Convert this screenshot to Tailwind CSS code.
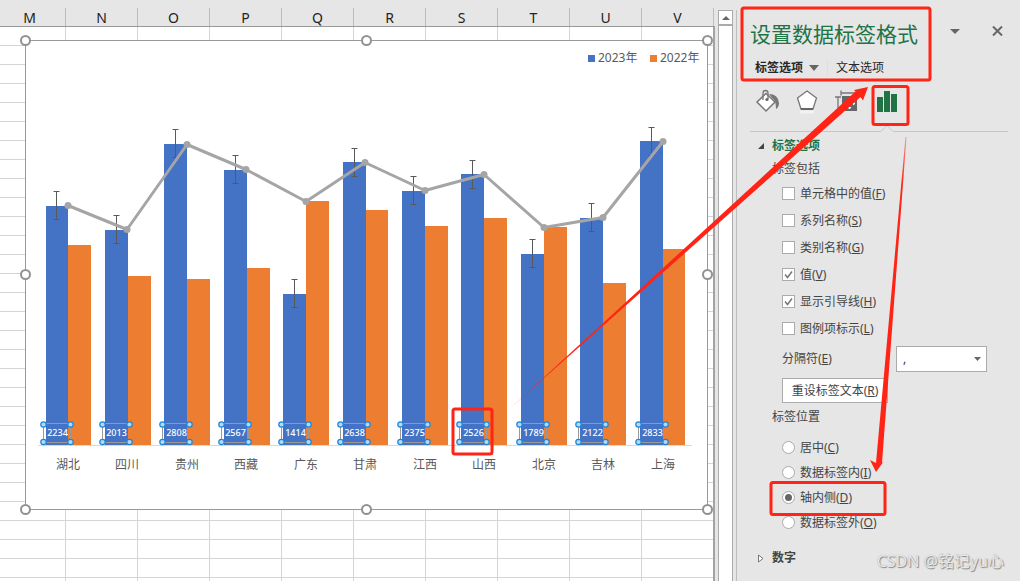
<!DOCTYPE html>
<html lang="zh-CN">
<head>
<meta charset="utf-8">
<title>设置数据标签格式</title>
<script src="https://cdn.jsdelivr.net/npm/@tailwindcss/browser@4"></script>
</head>
<body class="bg-[#e6e6e6]">
<div class="relative flex h-screen min-h-[581px] overflow-hidden bg-[#e6e6e6] font-['Noto_Sans','Noto_Sans_CJK_SC',sans-serif] text-xs text-[#444]">

  <!-- Worksheet -->
  <main class="flex min-w-0 flex-1 flex-col overflow-hidden">
    <div class="flex h-[27px] shrink-0 overflow-hidden border-b border-[#999] pt-2 text-sm leading-5 text-[#222]" id="cols"></div>
    <div class="relative flex-1 border-r-2 border-[#a3a3a3] bg-white bg-[linear-gradient(to_right,transparent_71px,#d4d4d4_71px),linear-gradient(to_bottom,transparent_18px,#d4d4d4_18px)] bg-[size:72px_19px] bg-[position:-6px_0]">
      <svg id="chart" class="absolute left-[18px] top-[6px] h-[484px] w-[698px]" viewBox="18 33 698 484" role="img" aria-label="2023年 2022年"></svg>
    </div>
  </main>

  <!-- Vertical scrollbar -->
  <div class="ml-[3px] mr-[3px] flex w-[15px] shrink-0 flex-col pt-[10px]">
    <button type="button" aria-label="向上滚动" class="flex h-[15px] items-center justify-center border border-[#ababab] bg-white">
      <svg class="h-1 w-2" viewBox="0 0 8 4"><path d="M0 4 4 0 8 4z" fill="#666"/></svg>
    </button>
    <div class="flex-1 border-x border-t border-[#ababab] bg-white"></div>
  </div>

  <!-- Format pane -->
  <aside class="flex w-[284px] shrink-0 flex-col pt-[10px]">
    <div class="flex-1 border-l border-[#bdbdbd] pl-[13px] pr-3">
      <header class="flex h-12 items-center">
        <h1 class="text-[21px] font-normal leading-6 text-[#217346]">设置数据标签格式</h1>
        <button type="button" aria-label="任务窗格选项" class="ml-8 flex h-5 w-3 items-center pb-1.5"><svg class="h-[5px] w-[10px]" viewBox="0 0 10 5"><path d="M0 0H10L5 5z" fill="#666"/></svg></button>
        <button type="button" aria-label="关闭" class="ml-auto mr-1 flex h-5 w-3 items-center pb-1.5"><svg class="h-[10px] w-[11px]" viewBox="0 0 11 10"><path d="M1 .5 10 9.500M10 .5 1 9.500" stroke="#666" stroke-width="2"/></svg></button>
      </header>
      <nav class="flex h-5 items-center pl-[5px] text-[#262626]">
        <button type="button" class="flex items-center gap-1.5 font-bold">标签选项 <svg class="h-[6px] w-[10px]" viewBox="0 0 10 6"><path d="M0 0H10L5 6z" fill="#666"/></svg></button>
        <button type="button" class="ml-2 border-l border-[#dedede] pl-2">文本选项</button>
      </nav>
      <div class="flex h-[38px] items-center gap-4 pl-[5px] pt-2">
        <button type="button" aria-label="填充与线条"><svg class="h-7 w-6" viewBox="0 0 24 28">
          <path d="M11 6.500 20 15 11 24 2 15z" fill="#fff" stroke="#777" stroke-width="1.500"/>
          <path d="M8 13V6Q8 3.500 10.500 3.500T13 6V12" fill="none" stroke="#777" stroke-width="1.300"/><circle cx="12" cy="12.500" r="1.600" fill="#666"/>
          <path d="M14 7Q23 7 24 16Q24 20 21 22Q21 13 17 11z" fill="#777"/></svg></button>
        <button type="button" aria-label="效果"><svg class="h-7 w-6" viewBox="0 0 24 28">
          <path d="M12 4 21.500 11 18 22H6L2.500 11z" fill="#fff" stroke="#777" stroke-width="1.300"/><path d="M6 22H18" stroke="#666" stroke-width="2"/><path d="M5 25H19" stroke="#fff" stroke-width="3" opacity=".5"/></svg></button>
        <button type="button" aria-label="大小与属性"><svg class="h-7 w-6" viewBox="0 0 24 28">
          <path d="M6 6H22M6 3.500V8.500M22 3.500V8.500M3 10V24M0 10H6M0 24H6" fill="none" stroke="#777" stroke-width="1.300"/>
          <path d="M7 9H22V24H7z" fill="#666"/><path d="M14.500 11V22M9 16.500H20" stroke="#fff" stroke-width="1.500" stroke-dasharray="3 1.500"/><path d="M12.500 13 14.500 11 16.500 13zM12.500 20 14.500 22 16.500 20zM11 14.500 9 16.500 11 18.500zM18 14.500 20 16.500 18 18.500z" fill="#fff"/></svg></button>
        <button type="button" aria-label="标签选项"><svg class="h-7 w-6" viewBox="0 0 24 28"><path d="M2 10H8V25H2zM9 4H15V25H9zM16 7H22V25H16z" fill="#217346"/></svg></button>
      </div>
      <div class="mt-[9px] flex h-[7px] items-end">
        <div class="h-px w-[131px] bg-[#c6c6c6]"></div>
        <svg class="h-[7px] w-3" viewBox="0 0 12 7"><path d="M0 6.500 6 .5 12 6.500" fill="none" stroke="#c6c6c6"/></svg>
        <div class="h-px flex-1 bg-[#c6c6c6]"></div>
      </div>

      <button type="button" class="mt-1 flex h-5 items-center gap-2 pl-2 font-bold text-[#217346]"><svg class="h-[6px] w-[6px]" viewBox="0 0 6 6"><path d="M6 0V6H0z" fill="#444"/></svg>标签选项</button>
      <fieldset class="mt-[3px]">
        <legend class="h-5 pl-[22px] leading-5">标签包括</legend>
        <div class="flex flex-col pl-8 pt-px" id="checks"></div>
      </fieldset>
      <div class="mt-1 flex h-[26px] items-center pl-8">
        <label for="sep" class="w-[114px]">分隔符(<u>E</u>)</label>
        <div class="relative h-[26px] w-[91px]">
          <select id="sep" class="h-full w-full appearance-none border border-[#ababab] bg-white px-1.5 text-[#333]"><option>,</option></select>
          <svg class="pointer-events-none absolute right-1.5 top-[11px] h-1 w-[7px]" viewBox="0 0 7 4"><path d="M0 0H7L3.500 4z" fill="#666"/></svg>
        </div>
      </div>
      <button type="button" class="ml-8 mt-1.5 h-[25px] w-[106px] border border-[#ababab] bg-white">重设标签文本(<u>R</u>)</button>
      <fieldset class="mt-1">
        <legend class="h-5 pl-[22px] leading-5">标签位置</legend>
        <div class="flex flex-col pl-8 pt-2" id="radios"></div>
      </fieldset>
      <button type="button" class="mt-[13px] flex h-5 items-center gap-2 pl-2 font-bold"><svg class="h-[9px] w-[6px]" viewBox="0 0 6 9"><path d="M.5 1 5 4.500.5 8z" fill="#fff" stroke="#777"/></svg>数字</button>
    </div>
  </aside>

  <!-- Highlight boxes and arrows lying over the sheet and pane -->
  <svg class="pointer-events-none absolute left-0 top-0 h-[581px] w-[1020px]" viewBox="0 0 1020 581" fill="none">
    <defs>
      <linearGradient id="fadeA" gradientUnits="userSpaceOnUse" x1="505" y1="413" x2="560" y2="363"><stop stop-color="#ff2415" stop-opacity=".3"/><stop offset="1" stop-color="#ff2415"/></linearGradient>
      <linearGradient id="fadeB" gradientUnits="userSpaceOnUse" x1="906" y1="137" x2="902" y2="185"><stop stop-color="#ff2415" stop-opacity=".4"/><stop offset="1" stop-color="#ff2415"/></linearGradient>
    </defs>
    <g stroke="#ff2415" stroke-width="3">
      <rect x="742" y="8" width="188" height="72" rx="2"/>
      <rect x="873" y="86.500" width="35" height="38" rx="2"/>
      <rect x="771" y="482.500" width="114" height="32" rx="2"/>
      <rect x="453" y="409" width="39" height="45" rx="2"/>
    </g>
    <path d="M505 413 855.500 91.500 854 90 868 87 863 100.500 860.500 97z" fill="url(#fadeA)"/>
    <path d="M905.500 137H906.500L882 463 884 461 876 472 870 460 876 463z" fill="url(#fadeB)"/>
  </svg>

  <div class="absolute bottom-2 right-4 text-base leading-6 text-[#e8e8e8] [text-shadow:1px_1px_1px_#888,0_0_1px_#aaa]">CSDN @铭记yu心</div>
</div>

<script>
document.getElementById('cols').innerHTML = [...'MNOPQRSTUV'].map((c, i) =>
  `<div class="${i ? 'w-[72px] shrink-0 border-r border-[#bdbdbd] text-center' : 'w-[66px] shrink-0 border-r border-[#bdbdbd] pr-1.5 text-center'}">${c}</div>`).join('');

document.getElementById('checks').innerHTML = [
  ['单元格中的值', 'F', 0], ['系列名称', 'S', 0], ['类别名称', 'G', 0],
  ['值', 'V', 1], ['显示引导线', 'H', 1], ['图例项标示', 'L', 0]
].map(([t, k, on]) => `<label class="flex h-[27px] items-center gap-[5px]">
  <span class="grid h-[13px] w-[13px] place-items-center"><input type="checkbox" ${on ? 'checked' : ''} class="peer col-start-1 row-start-1 h-[13px] w-[13px] appearance-none border border-[#ababab] bg-white">
  <svg class="pointer-events-none invisible col-start-1 row-start-1 h-[9px] w-[9px] peer-checked:visible" viewBox="0 0 9 9"><path d="M1 4.500 3.500 7.500 8 1.500" fill="none" stroke="#777" stroke-width="1.500"/></svg></span>
  <span>${t}(<u>${k}</u>)</span></label>`).join('');

document.getElementById('radios').innerHTML = [
  ['居中', 'C', 0], ['数据标签内', 'I', 0], ['轴内侧', 'D', 1], ['数据标签外', 'O', 0]
].map(([t, k, on]) => `<label class="flex h-[25px] items-center gap-[5px]">
  <span class="grid h-[13px] w-[13px] place-items-center"><input type="radio" name="pos" ${on ? 'checked' : ''} class="peer col-start-1 row-start-1 h-[13px] w-[13px] appearance-none rounded-full border border-[#ababab] bg-white">
  <span class="pointer-events-none invisible col-start-1 row-start-1 h-[7px] w-[7px] rounded-full bg-[#666] peer-checked:visible"></span></span>
  <span>${t}(<u>${k}</u>)</span></label>`).join('');

// name, value, blue left, middle, orange right, blue top, orange top, error top, trend y
const rows = [
  ['湖北', 2234, 46, 68, 91, 206, 245, 191, 205], ['四川', 2013, 105, 128, 151, 230, 276, 215, 229],
  ['贵州', 2808, 164, 187, 210, 144, 279, 129, 144], ['西藏', 2567, 224, 247, 270, 170, 268, 155, 169],
  ['广东', 1414, 283, 306, 329, 294, 201, 279, 201], ['甘肃', 2638, 343, 366, 388, 162, 210, 148, 162],
  ['江西', 2375, 402, 425, 448, 191, 226, 176, 190], ['山西', 2526, 461, 484, 507, 174, 218, 160, 174],
  ['北京', 1789, 521, 544, 567, 254, 227, 239, 227], ['吉林', 2122, 580, 603, 626, 218, 283, 203, 217],
  ['上海', 2833, 640, 663, 685, 141, 249, 127, 141]
];
const base = 445, px = i => Math.round(68 + 59.45 * i);
let s = `<rect x="25.500" y="40.500" width="682" height="469" fill="#fff" stroke="#999"/>
  <rect x="588" y="55" width="7" height="7" fill="#4472c4"/><text x="598" y="62" font-size="12" fill="#595959">2023年</text>
  <rect x="650" y="55" width="7" height="7" fill="#ed7d31"/><text x="660" y="62" font-size="12" fill="#595959">2022年</text>
  <path d="M38 445.500H692" stroke="#d9d9d9"/>`;
rows.forEach(([n, v, a, m, b, t1, t2], i) => {
  s += `<rect x="${a}" y="${t1}" width="${m - a}" height="${base - t1}" fill="#4472c4"/>
  <rect x="${m}" y="${t2}" width="${b - m}" height="${base - t2}" fill="#ed7d31"/>
  <text x="${px(i)}" y="469" font-size="12" text-anchor="middle" fill="#595959">${n}</text>`;
});
rows.forEach((r, i) => {
  const x = Math.round(56.3 + 59.45 * i) + .5, y = r[7] + .5;
  s += `<path d="M${x - 3} ${y}h6M${x} ${y}v28M${x - 3} ${y + 28}h6" stroke="#595959" fill="none"/>`;
});
s += `<polyline points="${rows.map((r, i) => px(i) + ',' + (r[8] + .5)).join(' ')}" fill="none" stroke="#a5a5a5" stroke-width="3" stroke-linejoin="round"/>`;
rows.forEach((r, i) => { s += `<circle cx="${px(i)}" cy="${r[8] + .5}" r="3.500" fill="#a5a5a5"/>`; });
rows.forEach((r, i) => {
  const x = Math.round(43 + 59.45 * i) + .5;
  s += `<rect x="${x}" y="423.500" width="27" height="19" fill="none" stroke="#999"/>
  <text x="${x + 14}" y="436" font-size="9" font-weight="500" text-anchor="middle" fill="#fff">${r[1]}</text>`;
  [[x, 424.5], [x + 27, 424.5], [x, 442], [x + 27, 442]].forEach(([cx, cy]) => {
    s += `<circle cx="${cx}" cy="${cy}" r="2.700" fill="#b4d8f5" stroke="#1a86d9" stroke-width="1.200"/>`;
  });
});
[[25.5, 40.5], [366.5, 40.5], [707.5, 40.5], [25.5, 274.5], [707.5, 274.5], [25.5, 509.5], [366.5, 509.5], [707.5, 509.5]].forEach(([x, y]) => {
  s += `<circle cx="${x}" cy="${y}" r="4.500" fill="#fff" stroke="#929292" stroke-width="2"/>`;
});
document.getElementById('chart').innerHTML = s;
</script>
</body>
</html>
